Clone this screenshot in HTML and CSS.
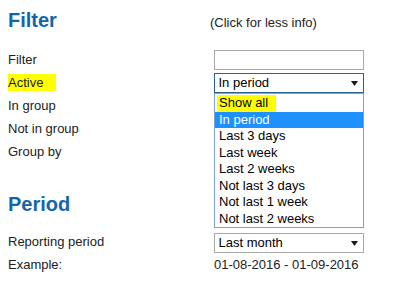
FILE: index.html
```html
<!DOCTYPE html>
<html>
<head>
<meta charset="utf-8">
<link rel="stylesheet" href="styles.css">
</head>
<body>
<div class="head">
  <h2 class="title">Filter</h2>
  <span class="toggle">(Click for less info)</span>
</div>
<div class="form">
  <div class="label">Filter</div>
  <div class="ctrl"><span class="input"></span></div>
  <div class="label"><span class="mark">Active</span></div>
  <div class="ctrl">
    <div class="select focus">
      <span>In period</span>
      <svg class="arrow" width="7" height="5" viewBox="0 0 7 5"><polygon points="0,0 7,0 3.5,5" fill="#1a1a1a"/></svg>
      <div class="list">
        <div class="item"><span class="mark2">Show all</span></div>
        <div class="item sel">In period</div>
        <div class="item">Last 3 days</div>
        <div class="item">Last week</div>
        <div class="item">Last 2 weeks</div>
        <div class="item">Not last 3 days</div>
        <div class="item">Not last 1 week</div>
        <div class="item">Not last 2 weeks</div>
      </div>
    </div>
  </div>
  <div class="label">In group</div>
  <div class="ctrl"></div>
  <div class="label">Not in group</div>
  <div class="ctrl"></div>
  <div class="label">Group by</div>
  <div class="ctrl"></div>
</div>
<h2 class="title period">Period</h2>
<div class="form form2">
  <div class="label">Reporting period</div>
  <div class="ctrl">
    <div class="select sel2">
      <span>Last month</span>
      <svg class="arrow" width="7" height="5" viewBox="0 0 7 5"><polygon points="0,0 7,0 3.5,5" fill="#1a1a1a"/></svg>
    </div>
  </div>
  <div class="label">Example:</div>
  <div class="ctrl">01-08-2016 - 01-09-2016</div>
</div>
</body>
</html>
```

FILE: styles.css
```css
body {
  margin: 8px;
  font-family: "Liberation Sans", Arial, sans-serif;
  font-size: 13px;
  color: #222;
  background: #fff;
}
.head {
  display: flex;
  align-items: baseline;
  height: 24px;
}
.title {
  margin: 0;
  font-size: 20px;
  line-height: 24px;
  font-weight: bold;
  color: #1466aa;
  width: 202px;
}
.toggle {
  color: #222;
}
.form {
  display: grid;
  grid-template-columns: 206px 150px;
  grid-auto-rows: 23px;
  line-height: 23px;
  margin-top: 16px;
}
.input {
  display: block;
  box-sizing: border-box;
  width: 150px;
  height: 20px;
  margin-top: 2px;
  border: 1px solid #a9a9a9;
  background: #fff;
}
.mark {
  display: inline-block;
  background: #ffff00;
  margin-left: -2px;
  padding: 1px 13px 0 2px;
  line-height: 16px;
}
.select {
  position: relative;
  box-sizing: border-box;
  width: 150px;
  height: 20px;
  margin-top: 2px;
  border: 1px solid #a9a9a9;
  display: flex;
  align-items: center;
  justify-content: space-between;
  padding: 0 5px 0 3.5px;
  line-height: 18px;
  color: #000;
  background: #fff;
}
.select.focus {
  border-color: #2a6496;
}
.arrow {
  display: block;
}
.list {
  position: absolute;
  left: -1px;
  top: 19px;
  width: 150px;
  box-sizing: border-box;
  border: 1px solid #7f9fd6;
  background: #fff;
  padding-top: 1px;
  z-index: 2;
}
.item {
  height: 16.5px;
  line-height: 16.5px;
  padding-left: 4px;
  white-space: nowrap;
  color: #000;
}
.item.sel {
  background: #1e90ff;
  color: #fff;
}
.mark2 {
  display: inline-block;
  background: #ffff00;
  margin-left: -2px;
  padding: 0 8px 0 2px;
}
.period {
  margin-top: 29px;
}
.form2 {
  margin-top: 14px;
}
.sel2 {
  margin-top: 3px;
}
```
